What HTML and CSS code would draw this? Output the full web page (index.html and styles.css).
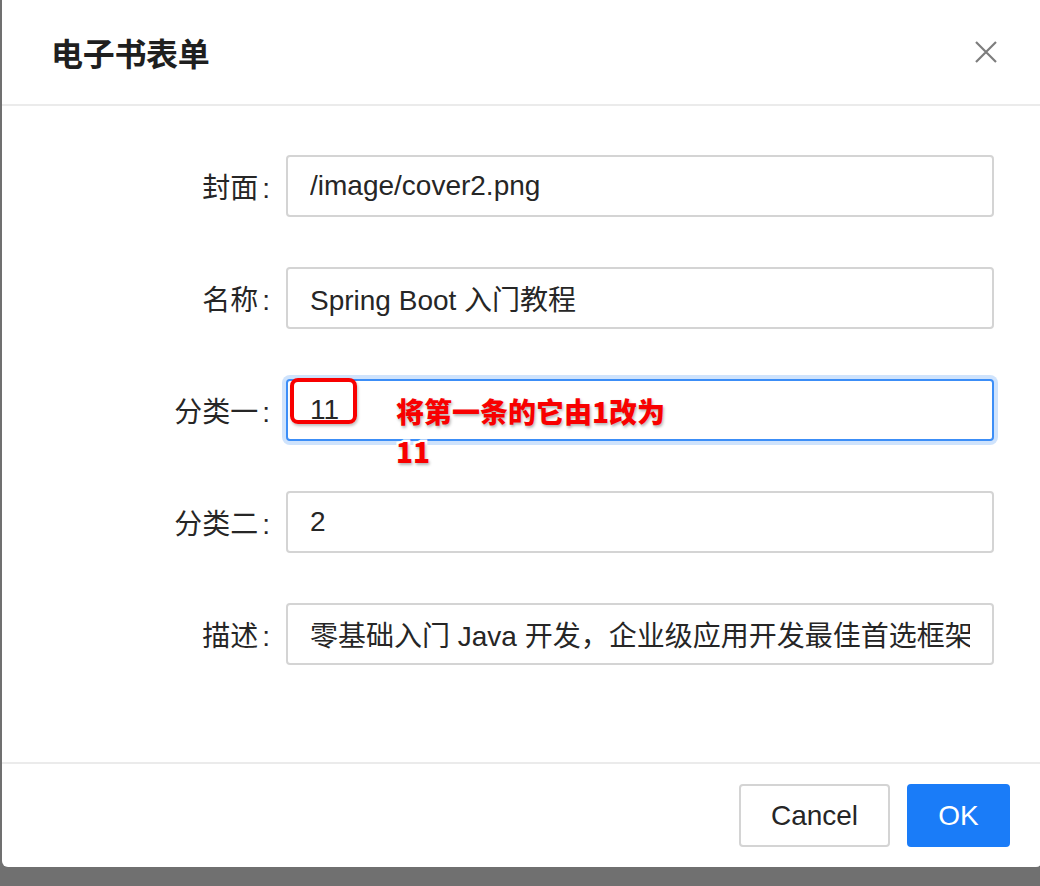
FILE: index.html
```html
<!DOCTYPE html>
<html lang="zh">
<head>
<meta charset="utf-8">
<title>电子书表单</title>
<link rel="stylesheet" href="styles.css">
</head>
<body>
<div class="modal">
  <div class="modal-header">
    <div class="modal-title">电子书表单</div>
    <svg class="close" width="22" height="22" viewBox="0 0 22 22"><path d="M1 1 L21 21 M21 1 L1 21" stroke="#7d7d7d" stroke-width="2.2" fill="none"/></svg>
  </div>
  <div class="modal-body">
    <div class="form">
      <label class="label">封面<span class="colon">:</span></label>
      <div class="field"><input class="input" value="/image/cover2.png"></div>

      <label class="label">名称<span class="colon">:</span></label>
      <div class="field"><input class="input" value="Spring Boot 入门教程"></div>

      <label class="label">分类一<span class="colon">:</span></label>
      <div class="field annotated">
        <input class="input focused" value="11">
        <div class="mark-box"></div>
        <div class="mark-text">将第一条的它由1改为<br>11</div>
      </div>

      <label class="label">分类二<span class="colon">:</span></label>
      <div class="field"><input class="input" value="2"></div>

      <label class="label">描述<span class="colon">:</span></label>
      <div class="field"><input class="input" value="零基础入门 Java 开发，企业级应用开发最佳首选框架"></div>
    </div>
  </div>
  <div class="modal-footer">
    <button class="btn btn-default">Cancel</button>
    <button class="btn btn-primary">OK</button>
  </div>
</div>
</body>
</html>
```

FILE: styles.css
```css
html, body {
  margin: 0;
  padding: 0;
  height: 886px;
  overflow: hidden;
}
body {
  background: #707070;
  font-family: "Liberation Sans", "Noto Sans CJK SC", sans-serif;
  color: #262626;
}
.modal {
  margin-left: 2px;
  width: 1040px;
  height: 867px;
  background: #fff;
  border-radius: 0 0 6px 6px;
  display: flex;
  flex-direction: column;
}
.modal-header {
  height: 104px;
  border-bottom: 2px solid #ebebeb;
  display: flex;
  align-items: center;
  justify-content: space-between;
  padding: 0 45px 0 50px;
}
.modal-title {
  font-family: "Noto Sans CJK SC", sans-serif;
  font-size: 32px;
  font-weight: 600;
  color: #1f1f1f;
  letter-spacing: -0.3px;
  margin-left: -1px;
}
.close {
  display: block;
}
.modal-body {
  padding: 49px 48px 97px 0;
  flex: 1;
}
.form {
  display: grid;
  grid-template-columns: 268px 1fr;
  column-gap: 16px;
  row-gap: 50px;
  align-items: center;
}
.label {
  text-align: right;
  font-size: 28px;
  font-family: "Noto Sans CJK SC", sans-serif;
  color: #262626;
  white-space: nowrap;
}
.colon {
  margin-left: 4px;
  font-family: "Liberation Sans", sans-serif;
}
.field {
  position: relative;
}
.input {
  box-sizing: border-box;
  width: 100%;
  height: 62px;
  margin: 0;
  border: 2px solid #d4d4d4;
  border-radius: 4px;
  padding: 0 22px;
  font-family: "Liberation Sans", "Noto Sans CJK SC", sans-serif;
  font-size: 28px;
  color: #262626;
  background: #fff;
  outline: none;
}
.input.focused {
  border-color: #3c8ef7;
  box-shadow: 0 0 0 4px #cfe3fc;
}
.mark-box {
  position: absolute;
  left: 4px;
  top: -1px;
  width: 59px;
  height: 38px;
  border: 4px solid #f80000;
  border-radius: 8px;
  box-shadow: 1px 2px 3px rgba(0,0,0,.25);
}
.mark-text {
  position: absolute;
  left: 110px;
  top: 12px;
  font-family: "Noto Sans CJK SC", sans-serif;
  font-size: 28px;
  font-weight: 900;
  line-height: 40px;
  color: #f80000;
  white-space: nowrap;
  -webkit-text-stroke: 5px #fff;
  paint-order: stroke fill;
  text-shadow: 1px 2px 3px rgba(0,0,0,.3);
}
.modal-footer {
  border-top: 2px solid #ebebeb;
  padding: 20px 32px 20px 0;
  display: flex;
  justify-content: flex-end;
  gap: 17px;
}
.btn {
  height: 63px;
  border-radius: 4px;
  font-family: "Liberation Sans", sans-serif;
  font-size: 28px;
  cursor: pointer;
  padding: 0;
}
.btn-default {
  width: 151px;
  background: #fff;
  border: 2px solid #d4d4d4;
  color: #262626;
}
.btn-primary {
  width: 103px;
  background: #1a7cf8;
  border: 2px solid #1a7cf8;
  color: #fff;
}
```
